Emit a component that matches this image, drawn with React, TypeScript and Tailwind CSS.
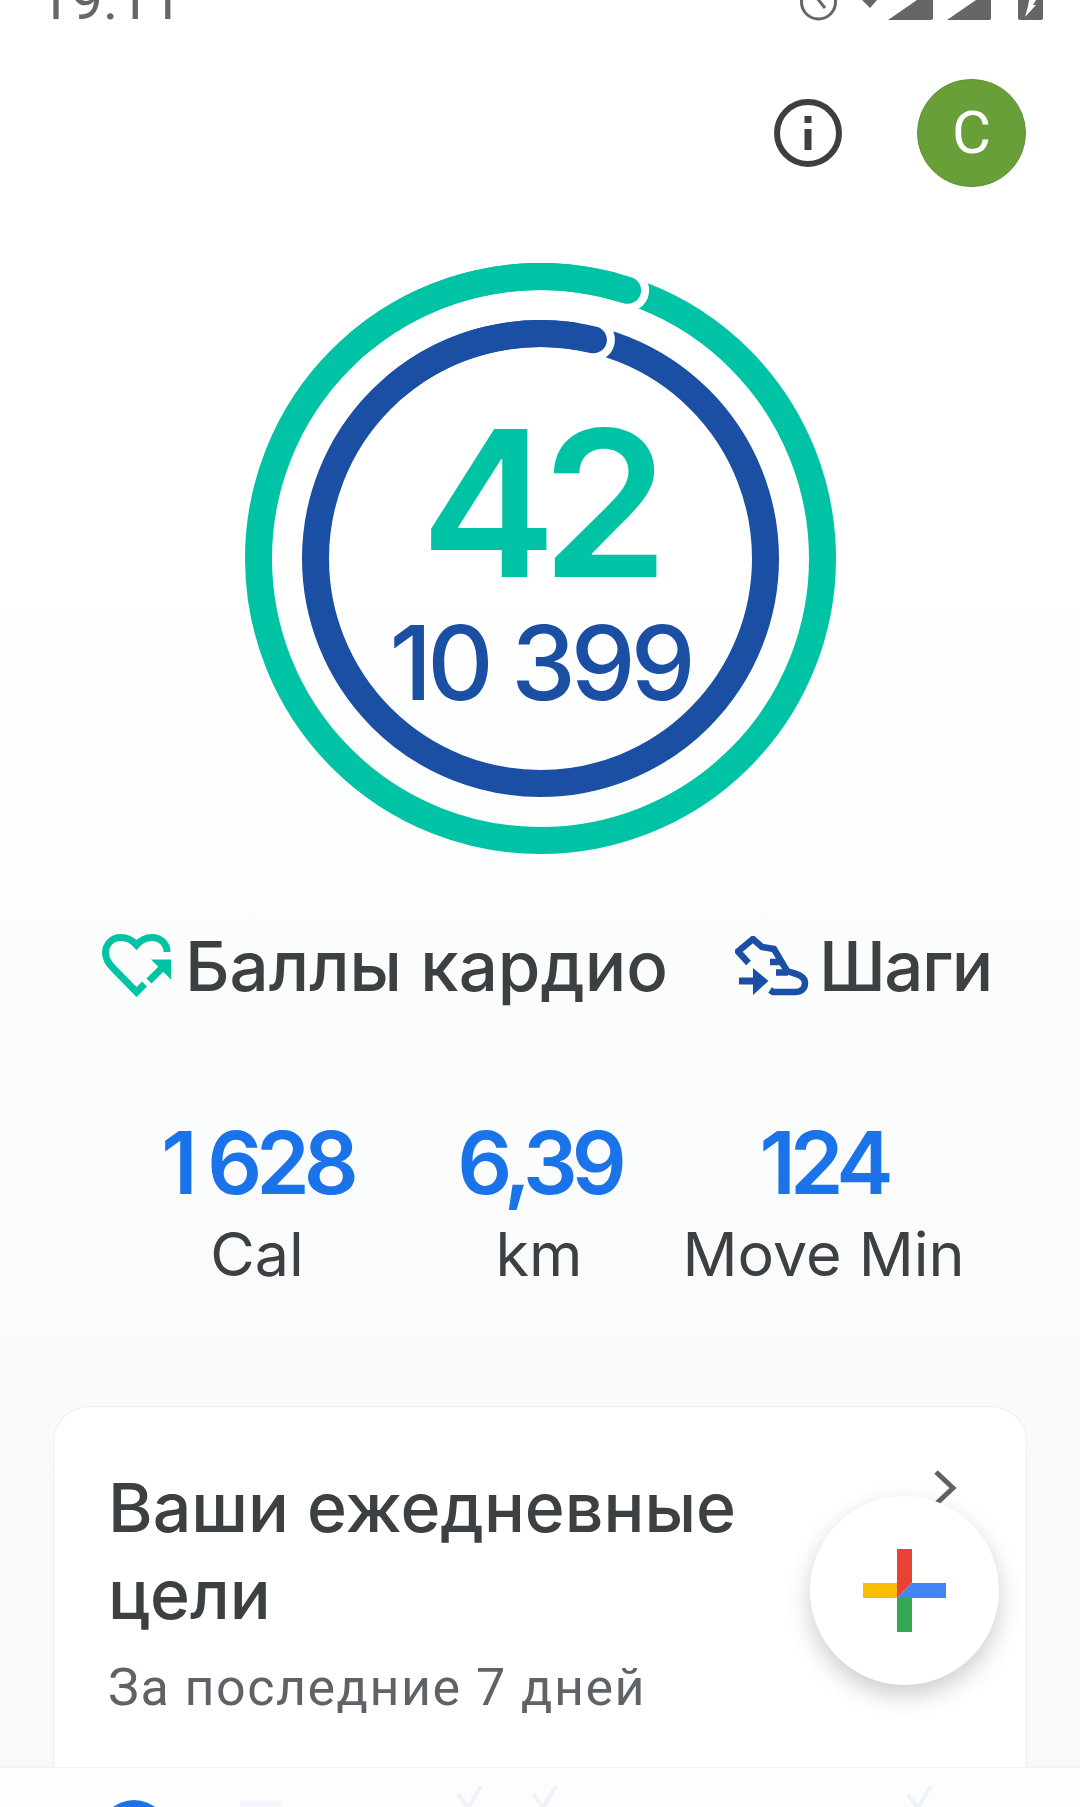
const CX = 295.5
const CY = 295.5

function polar(radius: number, deg: number) {
  const rad = (deg * Math.PI) / 180
  return { x: CX + radius * Math.sin(rad), y: CY - radius * Math.cos(rad) }
}

function RingEnd({ radius, end, color }: { radius: number; end: number; color: string }) {
  const from = polar(radius, -40)
  const to = polar(radius, end)
  return (
    <>
      <circle cx={CX} cy={CY} r={radius} fill="none" stroke={color} strokeWidth={27} />
      <circle cx={to.x} cy={to.y} r={21.5} fill="#fff" />
      <path
        d={`M${from.x} ${from.y} A${radius} ${radius} 0 0 1 ${to.x} ${to.y}`}
        fill="none"
        stroke={color}
        strokeWidth={27}
        strokeLinecap="round"
      />
    </>
  )
}

function StatusIcons() {
  return (
    <svg width="245" height="22" viewBox="0 0 245 22" className="block">
      {/* clock */}
      <circle cx="18.5" cy="2" r="17" fill="none" stroke="#666" strokeWidth="3" />
      <path d="M17 -2 L25 8" stroke="#666" strokeWidth="3" fill="none" />
      {/* alarm arrow */}
      <path d="M62 0 H77 L70 8 Z" fill="#666" />
      {/* signal */}
      <path d="M88 20 L117 0 H133 V18 Q133 20 131 20 Z" fill="#666" />
      <path d="M147 20 L176 0 H191 V18 Q191 20 189 20 Z" fill="#666" />
      {/* battery */}
      <path d="M218 0 H243 V18 Q243 20 241 20 H220 Q218 20 218 18 Z" fill="#666" />
      <path d="M229 0 H236 L233 5 H236 L225 17 L228 6 Z" fill="#fff" />
    </svg>
  )
}

function HeartIcon() {
  return (
    <svg width="70" height="64" viewBox="0 0 70 64" className="shrink-0">
      <path
        d="M65 18 C65 9 58 3.5 50 3.5 C43 3.5 38 7 34.5 11 C31 7 26 3.5 19 3.5 C10 3.5 3.5 10 3.5 19 C3.5 25 7 30 11 34 L34.5 58 L42.5 50"
        fill="none"
        stroke="#00c3a5"
        strokeWidth="7"
      />
      <path d="M47 47 L61 33" stroke="#00c3a5" strokeWidth="7" fill="none" />
      <path d="M49 25.5 H69 V45.5 Z" fill="#00c3a5" />
    </svg>
  )
}

function ShoeIcon() {
  return (
    <svg width="74" height="60" viewBox="0 0 74 60" className="shrink-0">
      <path
        d="M13.5 27 L3 15.5 L18 3 L27 11 L39 13 L52 35 C60 38 70 39 70 47 C70 53 66 56 60 56 H38 L35 54"
        fill="none"
        stroke="#1a4fa3"
        strokeWidth="6.5"
      />
      <path d="M35 26 H45 M41 36.5 H53" stroke="#1a4fa3" strokeWidth="6.5" fill="none" />
      <path d="M4 45 H20" stroke="#1a4fa3" strokeWidth="7" fill="none" />
      <path d="M18 32 L33.5 45 L18 59 Z" fill="#1a4fa3" />
    </svg>
  )
}

function PlusIcon() {
  return (
    <svg width="83" height="83" viewBox="0 0 83 83">
      <path d="M34 0 H49 V34 L34 49 Z" fill="#ea4335" />
      <path d="M83 34 H49 L34 49 H83 Z" fill="#4285f4" />
      <path d="M0 34 H34 V49 H0 Z" fill="#fbbc04" />
      <path d="M34 49 H49 V83 H34 Z" fill="#34a853" />
    </svg>
  )
}

function GhostCheck() {
  return (
    <svg width="30" height="22" viewBox="0 0 30 22">
      <path d="M3 8 L13 22 L27 -2" fill="none" stroke="#eef3fa" strokeWidth="4" />
    </svg>
  )
}

const stats = [
  { value: '1 628', label: 'Cal', width: 'w-[282px]' },
  { value: '6,39', label: 'km', width: 'w-[282px]' },
  { value: '124', label: 'Move Min', width: 'w-[287px]' },
]

export default function App() {
  return (
    <div className="relative flex h-[1807px] w-[1080px] flex-col overflow-hidden bg-gradient-to-b from-white from-[30%] to-[#f8f9fa] to-[85%] font-['Inter',sans-serif]">
      {/* Status bar */}
      <div className="flex h-[22px] items-end justify-between overflow-hidden pl-[38px] pr-[35px]">
        <span className="mb-[-6px] font-['Roboto',sans-serif] text-[58px] leading-none text-[#666]">19:11</span>
        <StatusIcons />
      </div>

      {/* Header */}
      <div className="mt-[57px] flex items-center justify-end pr-[54px]">
        <svg width="68" height="68" viewBox="0 0 68 68" className="mr-[75px]">
          <circle cx="34" cy="34" r="31" fill="none" stroke="#3c4043" strokeWidth="6" />
          <path d="M30.5 17 h7 v7 h-7 Z M30.5 30 h7 v21 h-7 Z" fill="#3c4043" />
        </svg>
        <div className="flex h-[108px] w-[109px] items-center justify-center rounded-full border border-[#5f9233] bg-[#689f38] font-['Roboto',sans-serif] text-[60px] text-white">
          C
        </div>
      </div>

      {/* Rings */}
      <div className="mt-[76px] grid h-[591px] w-[591px] self-center">
        <svg width="591" height="591" viewBox="0 0 591 591" className="col-start-1 row-start-1">
          <RingEnd radius={282} end={18} color="#00c3a5" />
          <RingEnd radius={225} end={13.6} color="#1a4fa3" />
        </svg>
        <div className="col-start-1 row-start-1 flex flex-col items-center pt-[145px]">
          <span className="mr-[6px] text-[204px] leading-[190px] font-semibold tracking-[-15px] text-[#00c3a5]">42</span>
          <span className="mt-[5px] text-[103px] leading-[120px] font-medium tracking-[-5px] text-[#1a4fa3]">10 399</span>
        </div>
      </div>

      {/* Legend */}
      <div className="mt-[80px] flex pl-[102px]">
        <div className="flex w-[633px] items-center gap-[13px]">
          <HeartIcon />
          <span className="text-[69px] leading-[64px] font-medium text-[#3c4043]">Баллы кардио</span>
        </div>
        <div className="flex items-center gap-[10px]">
          <ShoeIcon />
          <span className="text-[69px] leading-[64px] font-medium tracking-[-1.5px] text-[#3c4043]">Шаги</span>
        </div>
      </div>

      {/* Stats */}
      <div className="mt-[120px] flex pl-[116px]">
        {stats.map((s) => (
          <div key={s.label} className={`flex flex-col items-center ${s.width}`}>
            <span className="text-[86px] leading-[90px] font-semibold tracking-[-6px] text-[#1a73e8]">{s.value}</span>
            <span className="mt-[11px] text-[61px] leading-[70px] text-[#3c4043]">{s.label}</span>
          </div>
        ))}
      </div>

      {/* Goals card */}
      <div className="mx-[53px] mt-[117px] flex-1 overflow-hidden rounded-t-[36px] border border-b-0 border-[#eceef1] bg-white pl-[54px] pt-[57px]">
        <div className="flex items-start justify-between pr-[69px]">
          <h2 className="w-[690px] text-[68px] leading-[87px] font-medium text-[#3c4043]">Ваши ежедневные цели</h2>
          <svg width="24" height="36" viewBox="0 0 24 36" className="mt-[6px]">
            <path d="M3 2 L20 18 L3 34" fill="none" stroke="#5f6368" strokeWidth="5" />
          </svg>
        </div>
        <p className="mt-[15px] font-['Roboto',sans-serif] text-[52px] leading-[70px] tracking-[1.5px] text-[#5f6368]">За последние 7 дней</p>
      </div>

      {/* Bottom nav, mostly cut off */}
      <div className="relative h-[40px] border-t border-[#f1f2f4] bg-[#fdfdfe]">
        <div className="absolute left-[99px] top-[32px] h-[70px] w-[70px] rounded-full bg-[#1a73e8]" />
        <div className="absolute left-[240px] top-[33px] h-[20px] w-[41px] bg-[#f3f6fb]" />
        <div className="absolute left-[455px] top-[18px]"><GhostCheck /></div>
        <div className="absolute left-[530px] top-[18px]"><GhostCheck /></div>
        <div className="absolute left-[905px] top-[18px]"><GhostCheck /></div>
      </div>

      {/* FAB */}
      <div className="absolute left-[810px] top-[1496px] flex h-[189px] w-[189px] items-center justify-center rounded-full bg-white shadow-[0_10px_24px_rgba(0,0,0,0.2)]">
        <PlusIcon />
      </div>
    </div>
  )
}
